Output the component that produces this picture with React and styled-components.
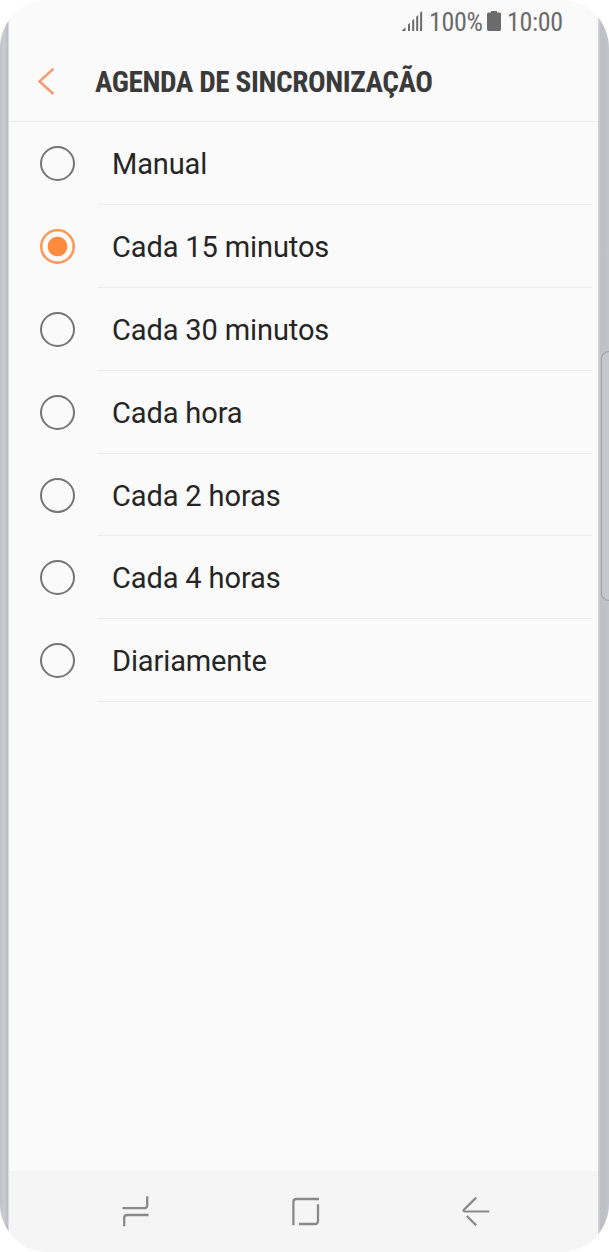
import { useState } from 'react';
import styled, { createGlobalStyle } from 'styled-components';

const options = [
    'Manual',
    'Cada 15 minutos',
    'Cada 30 minutos',
    'Cada hora',
    'Cada 2 horas',
    'Cada 4 horas',
    'Diariamente',
];

const App = () => {
    const [selected, setSelected] = useState(1);

    return (
        <>
            <GlobalStyle />
            <Phone>
                <LeftEdge />
                <Screen>
                    <StatusBar>
                        <svg width="22" height="22" viewBox="0 0 22 22" fill="#6b6b6b">
                            <path d="M0.5 21 L4.5 17.2 V21 Z" />
                            <path d="M7 21 V14.6 L9 12.8 V21 Z" />
                            <path d="M11.2 21 V10.6 L13.2 8.8 V21 Z" />
                            <path d="M15.2 21 V6.8 L17.2 5 V21 Z" />
                            <path d="M19.1 21 V2.8 L21.1 1 V21 Z" />
                        </svg>
                        <StatusText $width={52}>100%</StatusText>
                        <svg width="14" height="22" viewBox="0 0 14 22" fill="#6b6b6b">
                            <path d="M4 1 H10 V2.5 H12.6 Q14 2.5 14 4 V19.6 Q14 21 12.6 21 H1.4 Q0 21 0 19.6 V4 Q0 2.5 1.4 2.5 H4 Z" />
                        </svg>
                        <StatusText $width={55}>10:00</StatusText>
                    </StatusBar>

                    <Header>
                        <BackButton aria-label="Voltar">
                            <svg width="18" height="28" viewBox="0 0 18 28" fill="none" stroke="#f59a73" strokeWidth="2.6">
                                <path d="M16.4 0.8 L2.6 13.4 L16.4 26" />
                            </svg>
                        </BackButton>
                        <Title>AGENDA DE SINCRONIZAÇÃO</Title>
                    </Header>

                    <List>
                        {options.map((option, idx) => (
                            <Row key={option} onClick={() => setSelected(idx)}>
                                <Radio $checked={selected === idx} />
                                <Label>{option}</Label>
                            </Row>
                        ))}
                    </List>

                    <NavBar>
                        <svg width="28" height="32" viewBox="0 0 28 32" fill="none" stroke="#898989" strokeWidth="2.3">
                            <path d="M0.5 13.2 H22.2 Q25.2 13.2 25.2 10.2 V1.3" />
                            <path d="M26.5 20 H5.2 Q2.2 20 2.2 23 V31.2" />
                        </svg>
                        <svg width="28" height="32" viewBox="0 0 28 32" fill="none" stroke="#898989" strokeWidth="2.3">
                            <path d="M1.4 30.2 V7 Q1.4 4 4.4 4 H27" />
                            <path d="M7 29 H23 Q26 29 26 26 V9.3" />
                        </svg>
                        <svg width="28" height="32" viewBox="0 0 28 32" fill="none" stroke="#898989" strokeWidth="2.2">
                            <path d="M14.2 2.6 L1.9 14.7 Q0.8 16.5 3 16.5 H27.3" />
                            <path d="M4.8 21 L14.2 30.4" />
                        </svg>
                    </NavBar>
                </Screen>
                <RightEdge>
                    <SideKey />
                </RightEdge>
            </Phone>
        </>
    );
};

const GlobalStyle = createGlobalStyle`
    * {
        box-sizing: border-box;
    }
    body {
        margin: 0;
        background: #ffffff;
        font-family: Roboto, sans-serif;
    }
    svg {
        display: block;
        flex: none;
    }
`;

const Phone = styled.div`
    display: grid;
    grid-template-columns: 9px 1fr 11px;
    width: 609px;
    height: 1252px;
    border-radius: 48px;
    overflow: hidden;
    background: #fafafa;
`;

const LeftEdge = styled.div`
    background: linear-gradient(90deg, #c0c1c8 0, #cccdd3 45%, #bcbdc4 85%, #ededef 100%);
`;

const RightEdge = styled.div`
    padding: 351px 0 0 3px;
    background: linear-gradient(90deg, #d5d5d9 0, #bebec6 25%, #c4c4cc 100%);
`;

const SideKey = styled.div`
    height: 250px;
    border: 1px solid #a0a0a9;
    border-right: 0;
    border-radius: 9px 0 0 9px;
    background: #c6c6ce;
`;

const Screen = styled.main`
    display: flex;
    flex-direction: column;
    min-width: 0;
    background: #fafafa;
`;

const StatusBar = styled.div`
    display: flex;
    align-items: center;
    justify-content: flex-end;
    gap: 6px;
    height: 42px;
    padding-right: 36px;
`;

const StatusText = styled.span`
    width: ${({ $width }) => $width}px;
    padding-top: 2px;
    font: 400 26px/42px 'Roboto Condensed', Roboto, sans-serif;
    font-stretch: 75%;
    letter-spacing: -0.3px;
    color: #6b6b6b;
    white-space: nowrap;
`;

const Header = styled.header`
    display: flex;
    align-items: center;
    height: 80px;
    padding-left: 28px;
    border-bottom: 1px solid #ececee;
`;

const BackButton = styled.button`
    width: 58px;
    padding: 0;
    border: 0;
    background: none;
    cursor: pointer;
`;

const Title = styled.h1`
    margin: 0;
    padding-top: 1px;
    font: 700 29.3px/40px 'Roboto Condensed', Roboto, sans-serif;
    font-stretch: 75%;
    letter-spacing: -0.43px;
    color: #3a3a3a;
    white-space: nowrap;
`;

const List = styled.div`
    flex: 1;
`;

const Row = styled.div`
    display: grid;
    grid-template-columns: 58px 1fr;
    grid-template-rows: 100%;
    align-items: center;
    height: 82.9px;
    padding: 0 6px 0 31px;
    cursor: pointer;
`;

const Radio = styled.span`
    width: 35px;
    height: 35px;
    border: 2px solid ${({ $checked }) => ($checked ? '#f9954f' : '#757575')};
    border-radius: 50%;
    background: ${({ $checked }) => ($checked ? 'radial-gradient(circle, #ff8c3e 9.4px, transparent 10.2px)' : 'none')};
    box-shadow: ${({ $checked }) => ($checked ? 'inset 0 0 0 0.6px #f9954f' : 'none')};
`;

const Label = styled.span`
    height: 100%;
    padding-left: 14px;
    border-bottom: 1px solid #eeeeee;
    font-size: 29px;
    line-height: 85px;
    letter-spacing: -0.12px;
    color: #252525;
`;

const NavBar = styled.nav`
    display: flex;
    justify-content: center;
    align-items: center;
    gap: 142px;
    height: 81px;
    padding: 0 0 2px 4px;
    background: #f5f5f5;
`;

export default App;
